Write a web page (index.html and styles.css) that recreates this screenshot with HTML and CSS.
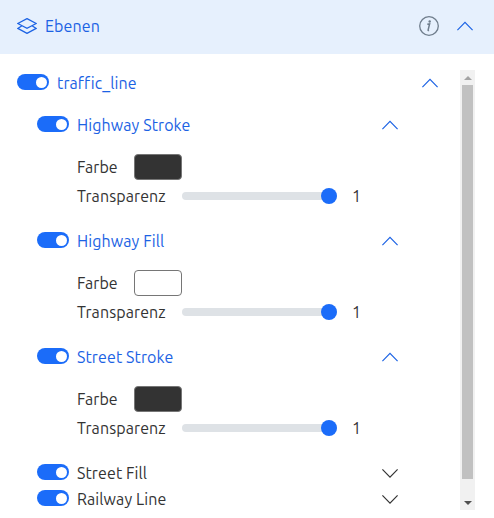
FILE: index.html
```html
<!DOCTYPE html>
<html lang="de">
<head>
<meta charset="utf-8">
<title>Ebenen</title>
<link rel="stylesheet" href="styles.css">
</head>
<body>
<svg class="defs" aria-hidden="true">
  <symbol id="up" viewBox="0 0 16 16"><path d="M.4 12.1 8 4.4l7.6 7.7"/></symbol>
  <symbol id="down" viewBox="0 0 16 16"><path d="M.4 4.4 8 12.1l7.6-7.7"/></symbol>
</svg>
<header class="header">
  <svg class="layers" viewBox="0 0 20 16"><path d="M10 .6 19.200 5.500 10 10.400 .8 5.500zM4.600 7.900 .8 10.400 10 15.400l9.200-5-3.800-2.500"/></svg>
  <span class="title">Ebenen</span>
  <svg class="info" viewBox="0 0 20 20"><circle cx="10" cy="10" r="9.300"/><path class="stem" d="M8.300 8.300l2.300-.4-1.500 6.200q-.1.800.9.300"/><circle class="dot" cx="10.700" cy="5.500" r="1.200"/></svg>
  <svg class="chevron"><use href="#up"/></svg>
</header>
<div class="body">
  <main class="tree">
    <div class="row active"><span class="switch"></span><span class="label">traffic_line</span><svg class="chevron"><use href="#up"/></svg></div>
    <div class="children">
      <section class="layer">
        <div class="row active"><span class="switch"></span><span class="label">Highway Stroke</span><svg class="chevron"><use href="#up"/></svg></div>
        <div class="details">
          <div class="field"><span class="name color-name">Farbe</span><span class="swatch dark"></span></div>
          <div class="field"><span class="name">Transparenz</span><span class="slider"></span><span class="value">1</span></div>
        </div>
      </section>
      <section class="layer">
        <div class="row active"><span class="switch"></span><span class="label">Highway Fill</span><svg class="chevron"><use href="#up"/></svg></div>
        <div class="details">
          <div class="field"><span class="name color-name">Farbe</span><span class="swatch"></span></div>
          <div class="field"><span class="name">Transparenz</span><span class="slider"></span><span class="value">1</span></div>
        </div>
      </section>
      <section class="layer">
        <div class="row active"><span class="switch"></span><span class="label">Street Stroke</span><svg class="chevron"><use href="#up"/></svg></div>
        <div class="details">
          <div class="field"><span class="name color-name">Farbe</span><span class="swatch dark"></span></div>
          <div class="field"><span class="name">Transparenz</span><span class="slider"></span><span class="value">1</span></div>
        </div>
      </section>
      <div class="row"><span class="switch"></span><span class="label">Street Fill</span><svg class="chevron"><use href="#down"/></svg></div>
      <div class="row"><span class="switch"></span><span class="label">Railway Line</span><svg class="chevron"><use href="#down"/></svg></div>
    </div>
  </main>
  <div class="scrollbar"><span class="arrow arrow-up"></span><span class="thumb"></span><span class="arrow arrow-down"></span></div>
</div>
</body>
</html>
```

FILE: styles.css
```css
* { box-sizing: border-box; }
body {
  margin: 0;
  width: 494px;
  height: 518px;
  overflow: hidden;
  background: #fff;
  color: #333;
  font: 16px/26px Ubuntu, "Noto Sans", sans-serif;
  letter-spacing: .1px;
}
.defs { display: none; }
svg { fill: none; flex: none; }
.header {
  display: flex;
  align-items: center;
  height: 54px;
  padding: 0 21px 2px 17px;
  background: #e6f0fd;
  color: #1b62e4;
}
.layers { width: 20px; height: 16px; stroke: currentColor; stroke-width: 1.250; }
.title { flex: 1; margin-left: 8px; line-height: 24px; }
.info { width: 20px; height: 20px; margin-right: 18px; stroke: #6f7d8c; stroke-width: 1.300; }
.info .stem { stroke-width: 1.500; }
.info .dot { fill: #6f7d8c; stroke: none; }
.chevron { width: 16px; height: 16px; stroke: currentColor; stroke-width: 1.200; }
.body { display: flex; height: 440px; margin: 16px 19px 0 17px; }
.tree { width: 421px; margin-right: 22px; }
.row { display: flex; align-items: center; height: 26px; }
.active { color: #1b62e4; }
.switch {
  display: flex;
  justify-content: flex-end;
  align-items: center;
  width: 32px;
  height: 16px;
  margin-bottom: 2px;
  padding-right: 2.500px;
  border-radius: 8px;
  background: #1b6cf9;
}
.switch::after { content: ""; width: 11px; height: 11px; border-radius: 50%; background: #fff; }
.label { flex: 1; margin-left: 8px; white-space: nowrap; }
.children { margin: 16px 40px 0 20px; }
.layer { height: 116px; }
.details { padding: 16px 0 0 40px; }
.field { display: flex; align-items: center; height: 26px; }
.field + .field { margin-top: 3px; }
.name { width: 105px; }
.color-name { width: 57px; }
.swatch { width: 48px; height: 26px; border: 1px solid #767676; border-radius: 4px; background: #fff; }
.dark { background: #333; }
.slider {
  display: flex;
  align-items: center;
  justify-content: flex-end;
  width: 155px;
  height: 8px;
  border-radius: 4px;
  background: #dee2e6;
}
.slider::after { content: ""; width: 16px; height: 16px; border-radius: 50%; background: #1b6cf9; }
.value { margin-left: 15px; }
.scrollbar {
  display: flex;
  flex-direction: column;
  align-items: center;
  width: 15px;
  background: #f1f1f1;
}
.arrow { display: flex; align-items: center; justify-content: center; height: 15px; }
.arrow::after { content: ""; border: 4px solid transparent; }
.arrow-up::after { border-top: 0; border-bottom-color: #a3a3a3; }
.arrow-down { margin-top: auto; }
.arrow-down::after { border-bottom: 0; border-top-color: #505050; }
.thumb { width: 11px; height: 394px; background: #c1c1c1; }
```
